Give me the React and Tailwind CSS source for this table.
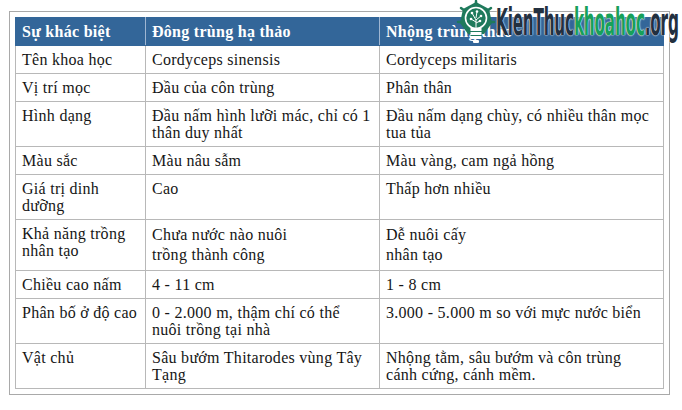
const rows = [
  { a: "Tên khoa học", b: "Cordyceps sinensis", c: "Cordyceps militaris" },
  { a: "Vị trí mọc", b: "Đầu của côn trùng", c: "Phân thân" },
  {
    a: "Hình dạng",
    b: "Đầu nấm hình lưỡi mác, chỉ có 1 thân duy nhất",
    c: "Đầu nấm dạng chùy, có nhiều thân mọc tua tủa",
  },
  { a: "Màu sắc", b: "Màu nâu sẫm", c: "Màu vàng, cam ngả hồng" },
  { a: "Giá trị dinh dưỡng", b: "Cao", c: "Thấp hơn nhiều" },
  {
    a: "Khả năng trồng nhân tạo",
    b: ["Chưa nước nào nuôi", "trồng thành công"],
    c: ["Dễ nuôi cấy", "nhân tạo"],
    tall: true,
  },
  { a: "Chiều cao nấm", b: "4 - 11 cm", c: "1 - 8 cm" },
  {
    a: "Phân bố ở độ cao",
    b: "0 - 2.000 m, thậm chí có thể nuôi trồng tại nhà",
    c: "3.000 - 5.000 m so với mực nước biển",
  },
  {
    a: "Vật chủ",
    b: "Sâu bướm Thitarodes vùng Tây Tạng",
    c: ["Nhộng tằm, sâu bướm và côn trùng", "cánh cứng, cánh mềm."],
  },
];

function Cell({ value, tall }) {
  if (Array.isArray(value)) {
    return (
      <td className={`border border-[#b8b8b8] px-[6px] pt-[5px] pb-[5px] align-top ${tall ? "leading-[20px]" : ""}`}>
        {value[0]}
        <br />
        {value[1]}
      </td>
    );
  }
  return (
    <td className="border border-[#b8b8b8] px-[6px] pt-[5px] pb-[5px] align-top">
      {value}
    </td>
  );
}

function Logo() {
  return (
    <div className="absolute left-[455px] top-0 flex items-start pointer-events-none">
      <svg width="42" height="46" viewBox="0 0 40 46">
        <g stroke="#1f7a5c" strokeWidth="2.5" strokeLinecap="round">
          <line x1="20" y1="1" x2="20" y2="5" />
          <line x1="5" y1="8" x2="9" y2="11" />
          <line x1="35" y1="8" x2="31" y2="11" />
          <line x1="2" y1="22" x2="6" y2="22" />
          <line x1="38" y1="22" x2="34" y2="22" />
        </g>
        <polygon points="20,2 33,9 36,23 28,34 12,34 4,23 7,9" fill="#1f7a5c" />
        <circle cx="20" cy="18" r="10.5" fill="none" stroke="#fff" strokeWidth="1.6" />
        <g fill="#fff">
          <circle cx="16" cy="13" r="1.3" />
          <circle cx="21" cy="11.5" r="1.3" />
          <circle cx="25" cy="16" r="1.3" />
          <circle cx="15" cy="19" r="1.3" />
          <circle cx="24" cy="21" r="1.3" />
        </g>
        <g stroke="#fff" strokeWidth="1" fill="none">
          <path d="M20 28 V20 M20 20 L16 13 M20 18 L21 11.5 M20 20 L25 16 M20 22 L15 19 M20 23 L24 21" />
        </g>
        <rect x="14.5" y="28" width="11" height="3" fill="#fff" />
        <rect x="14.5" y="32" width="11" height="3" fill="#fff" />
        <rect x="14.5" y="36" width="11" height="3" fill="#fff" />
        <rect x="17" y="40" width="6" height="3" rx="1" fill="#fff" />
        <rect x="14.5" y="31" width="11" height="1" fill="#1f7a5c" />
        <rect x="14.5" y="35" width="11" height="1" fill="#1f7a5c" />
      </svg>
      <div className="mt-[4px] -ml-[1px] inline-block origin-left [transform:scaleX(0.46)] whitespace-nowrap text-[37px] leading-[37px] font-bold tracking-[-0.5px] font-['DejaVu_Sans_Condensed','DejaVu_Sans',sans-serif] [text-shadow:0_0_2px_#fff,0_0_2px_#fff]">
        <span className="text-[#23303f]">KienThuc</span>
        <span className="text-[#17a05a]">khoahoc</span>
        <span className="text-[#23303f]">.org</span>
      </div>
    </div>
  );
}

export default function App() {
  return (
    <div className="relative w-[682px] h-[410px] bg-white overflow-hidden font-['Liberation_Serif','Times_New_Roman',serif] text-[16px] leading-[17px] tracking-[0.28px] text-[#161616]">
      <div className="ml-[9px] mt-[11px] w-[661px] border border-[#a9a9a9] p-[5px]">
        <table className="w-[648px] border-collapse table-fixed">
          <colgroup>
            <col className="w-[130px]" />
            <col className="w-[234px]" />
            <col className="w-[284px]" />
          </colgroup>
          <thead>
            <tr className="bg-[#336699] text-white font-bold">
              <th className="border border-[#336699] border-r-[#9fb6d2] px-[6px] pt-[5px] pb-[5px] text-left">
                Sự khác biệt
              </th>
              <th className="border border-[#336699] border-r-[#9fb6d2] px-[6px] pt-[5px] pb-[5px] text-left">
                Đông trùng hạ thảo
              </th>
              <th className="border border-[#336699] px-[6px] pt-[5px] pb-[5px] text-left">
                Nhộng trùng thảo
              </th>
            </tr>
          </thead>
          <tbody>
            {rows.map((r, i) => (
              <tr key={i}>
                <Cell value={r.a} />
                <Cell value={r.b} tall={r.tall} />
                <Cell value={r.c} tall={r.tall} />
              </tr>
            ))}
          </tbody>
        </table>
      </div>
      <Logo />
    </div>
  );
}
